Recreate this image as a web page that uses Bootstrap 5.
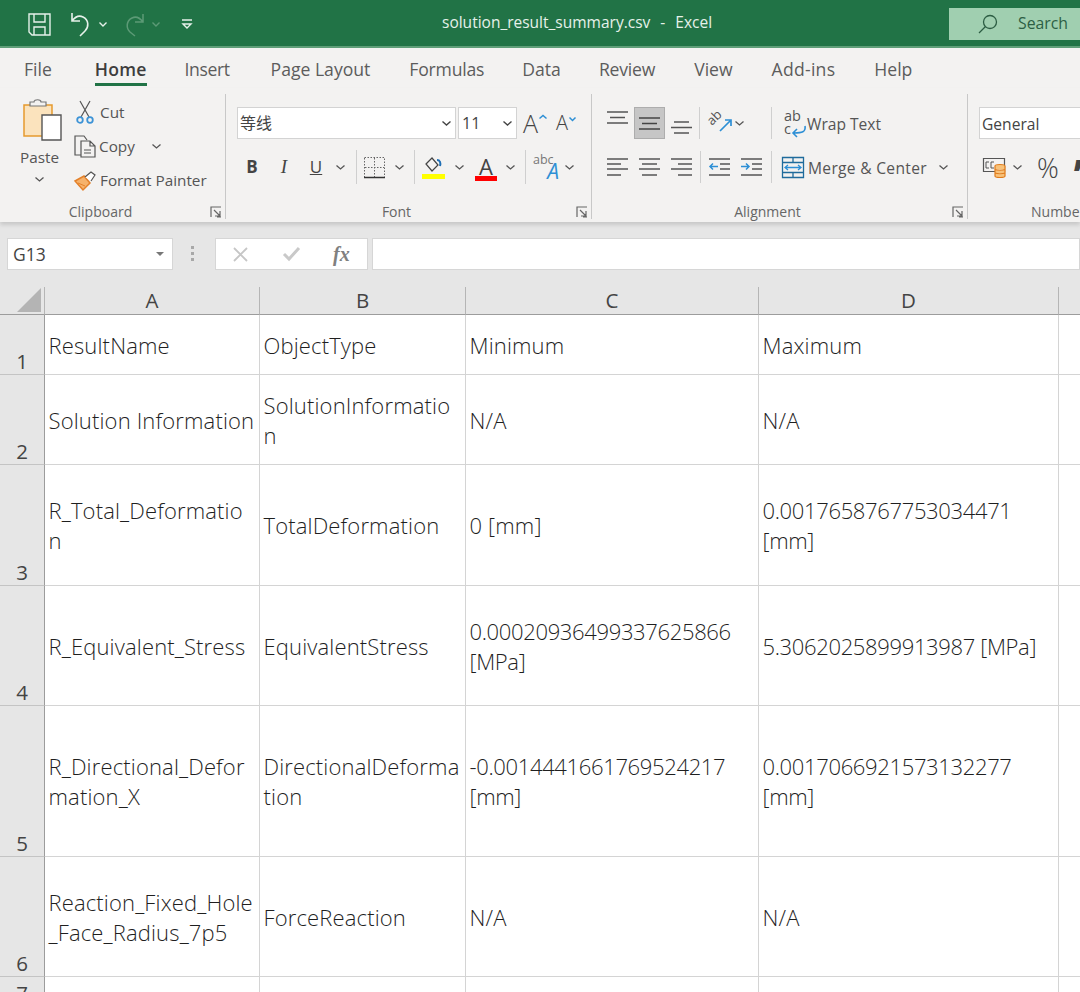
<!doctype html>
<html lang="en"><head><meta charset="utf-8"><title>solution_result_summary.csv - Excel</title>
<link href="https://cdn.jsdelivr.net/npm/bootstrap@5.3.0/dist/css/bootstrap.min.css" rel="stylesheet">
<style>
html,body{height:992px;overflow:hidden;background:#e6e6e6}
body{font-family:"Open Sans","Noto Sans CJK SC",sans-serif;color:#444}
svg{display:block;flex:none;overflow:visible}
.titlebar{height:48px;background:#217346;border-bottom:2px solid #5f9e78;color:#e6f1ea;position:relative}
.qat{padding-left:28px;margin-top:2px}
.q1{margin-left:19px}.q2{margin-left:7px}.q3{margin-left:16px}.q4{margin-left:22px}
.slot{display:flex;align-items:center;justify-content:center;flex:none}
.t-name{position:absolute;left:442px;top:11px;font-size:15.5px;line-height:22px;white-space:pre;word-spacing:1px}
.searchbox{margin-left:auto;margin-top:2px;width:131px;height:32px;background:#a0cfb0;color:#2d5f45;font-size:15.8px;padding-left:29px;gap:20px}
.tabs{height:40px;background:#f3f2f1;padding-left:24px;gap:38px;font-size:17.6px;color:#5c5c5c}
.tabs .nav-link{padding:0;color:#5c5c5c;height:38px;line-height:42px}
.tabs .nav-link.on{font-weight:600;color:#3d3d3d;border-bottom:3px solid #217346;letter-spacing:.2px}
.tb-file{margin-right:5px}.tb-ins{margin-right:3px;letter-spacing:-.4px}.tb-page{margin-right:1px}.tb-form{letter-spacing:-.2px}
.tb-rev{margin-right:1px;letter-spacing:-.2px}.tb-view{margin-right:1px}.tb-add{margin-right:1px;letter-spacing:.25px}
.ribbon{height:134px;padding-top:6px;background:#f3f2f1;box-shadow:0 3px 4px rgba(0,0,0,.13);position:relative;overflow:hidden;font-size:15.6px;color:#555}
.grp{flex:none;height:125px;border-right:1px solid #c8c8c8;position:relative;display:flex;flex-direction:column}
.grp-body{height:113px;flex:none}
.grp-foot{font-size:14px;line-height:18px;text-align:center;color:#666;height:18px;margin-top:-4px;padding-right:24px}
.launch{position:absolute;right:3px;bottom:1px}
.g-clip{width:226px}.g-font{width:366px}.g-align{width:376px}.g-num{width:112px;border:0}
.paste{width:68px;padding-left:22px;padding-top:5px}
.paste-lbl{display:block;width:38px;text-align:center;margin-top:6px;line-height:20px;margin-left:-2px;font-size:15.3px}
.chev-p{margin:10px 0 0 13px}
.cmds{padding-left:6px;padding-top:1px}
.cmd{height:34px;white-space:nowrap;font-size:15.3px}
.cmd-cut{gap:6px}.cmd-cut svg{margin-left:2px}
.cmd-copy{gap:3px}.cmd-fmt{gap:4px}
.chev-c{margin-left:14px}
.fieldbox{height:32px;background:#fff;border:1px solid #d3d3d3;color:#444;display:flex;align-items:center;justify-content:space-between;flex:none}
.g-font .grp-body,.g-align .grp-body,.g-num .grp-body{padding-top:13px}
.tool-row{height:32px}
.tool-row2{height:34px;margin-top:11px}
.f1{width:219px;margin-left:11px;padding:0 4px 0 2px;font-size:16px}
.f2{width:59px;margin-left:2px;padding:0 4px 0 3px;font-size:16px}
.vs{width:1px;height:34px;background:#cfcfcf;flex:none}
.selbtn{background:#c6c6c6;border:1px solid #adadad;height:32px}
.f3{width:102px;margin-left:11px;padding:3px 0 0 2px;font-size:15.6px}
.fxbar{height:65px;padding:16px 7px 0}
.fxbox{height:32px;background:#fff;border:1px solid #d6d6d6;flex:none}
.namebox{width:166px;font-size:17.5px;padding:0 8px 0 5px;color:#444}
.fxbtns{width:153px;margin-left:42px}
.fxinput{flex:1;margin-left:4px;margin-right:-7px}
.grip{width:3px;margin-left:18px;margin-right:-21px}
table.sheet{table-layout:fixed;width:1081px;border-collapse:separate;border-spacing:0;margin:0;background:#fff;font-size:22px;line-height:30px;color:#1f1f1f;font-family:"Open Sans","Noto Sans CJK SC",sans-serif;font-weight:300;letter-spacing:.15px}
.sheet td,.sheet th{padding:0 0 0 3.5px;border:0;border-right:1px solid #d4d4d4;border-bottom:1px solid #d4d4d4;vertical-align:middle;white-space:nowrap;overflow:hidden;box-shadow:none;background:#fff;color:#1f1f1f}
.sheet td.numv{letter-spacing:-.35px}
.sheet thead th{height:28px;background:#e6e6e6;font-weight:400;text-align:center;padding:0;font-size:20.5px;line-height:27px;border-bottom:1px solid #9c9c9c;border-right:1px solid #b5b5b5;color:#444;letter-spacing:0}
.sheet tbody th{background:#e6e6e6;font-weight:400;text-align:center;vertical-align:bottom;padding:0;font-size:20.5px;line-height:26px;border-right:1px solid #9c9c9c;border-bottom:1px solid #c4c4c4;color:#444;letter-spacing:0}
.r1{height:60px}.r2{height:90px}.r3{height:121px}.r4{height:120px}.r5{height:151px}.r6{height:120px}.r7{height:30px}
.corner{position:relative}
.font-up,.font-dn{color:#444;line-height:1;align-items:flex-start;position:relative;font-weight:300}
.font-up{font-size:25px;margin-left:6px;width:27px;justify-content:flex-start}.font-dn{font-size:20px;margin-left:6px;width:22px;justify-content:flex-start}
.font-up svg,.font-dn svg{margin:4px 0 0 1px}
.sb,.si,.su{width:32px;font-size:17px;color:#444}
.sb{margin-left:10px;font-weight:700}.si{font-style:italic;font-family:"Liberation Serif",serif;font-size:19px}.su{text-decoration:underline}
.su+svg{margin-left:4px}
.sp1{margin-left:11px}.sp2{margin-left:7px}.sp3{margin-left:10px}.sp3b{margin-left:10px}.sp4{margin-left:7px}
.colorA{width:22px;margin-left:11px;font-size:22px;line-height:20px;height:27px;border-bottom:5px solid #f00;color:#444;padding-top:2px}
.sp5{margin-left:9px}.sp3c{margin-left:10px}
.abc{width:26px;margin-left:7px;position:relative;height:26px}
.abc span{position:absolute;left:0;top:-1px;font-size:12.5px;line-height:14px;color:#777}
.abc b{position:absolute;right:0;bottom:-2px;font-size:21px;line-height:22px;font-weight:400;font-style:italic;color:#2d8fd5}
.sp6{margin-left:6px}
.al-row{padding-left:15px}
.a1{width:31px;margin-left:6px}.a2{margin-left:6px;margin-top:8px}.a0-t{margin-top:-12px}
.a3{margin-left:7px;height:32px}.a4{margin-left:8px}.a5{margin-left:4px}.a6{margin-left:27px;height:32px}
.wrap-ico{margin-left:12px;position:relative;width:22px;height:28px;font-size:14.5px;line-height:13px;color:#555}
.wrap-ico span{position:absolute;left:0;top:0}.wrap-ico svg{position:absolute;left:8px;top:17px}
.wraptxt{margin-left:1px;margin-top:4px}
.ori-t{font-family:"Open Sans",sans-serif;font-size:13px;fill:#555;stroke:none}
.b1,.b2{margin-left:11px}.b3{margin-left:8px;height:32px}.b4{margin-left:8px}.b5{margin-left:11px}.b6{margin-left:9px;height:32px}.b7{margin-left:10px}
.mergetxt{margin-left:4px;margin-top:3px;letter-spacing:.3px}.b8{margin-left:12px}
.c1{margin-left:15px}.c2{margin-left:7px}
.pct{margin-left:15px;font-size:27px;line-height:1;color:#444;font-weight:300}.cma{margin-left:14px;margin-top:-24px;font-size:44px;line-height:20px;height:34px;font-weight:700;color:#444}
.num-foot{text-align:left;padding:0 0 0 63px;white-space:nowrap}
.x1{margin-left:17px}.x2{margin-left:35px}
.fxl{margin-left:33px;font-family:"Liberation Serif",serif;font-style:italic;font-weight:700;font-size:20px;color:#808080}
.tri{position:absolute;right:3px;bottom:2px}
</style></head><body>
<div class="titlebar d-flex align-items-center">
 <div class="qat d-flex align-items-center">
  <svg width="23" height="23" viewBox="0 0 23 23" fill="none" stroke="#e6f1ea" stroke-width="1.4"><path d="M1 1h21v21H4l-3-3zM6 1v8h11V1M6 22v-8h11v8"/></svg>
  <svg class="q1" width="22" height="26" viewBox="0 0 22 26" fill="none" stroke="#e6f1ea" stroke-width="1.6"><path d="M2 2v8h8M2 10c3-4 7-6 11-4 6 3 6 10 2 14l-5 5"/></svg>
  <svg class="q2" width="8" height="5" viewBox="0 0 8 5" fill="none" stroke="#e6f1ea" stroke-width="1.4"><path d="M.5.5 4 4 7.500.5"/></svg>
  <svg class="q3" width="22" height="24" viewBox="0 0 22 24" fill="none" stroke="#5c9a76" stroke-width="1.5"><path d="M20 2v8h-8M20 10c-3-4-7-6-11-4-6 3-6 10-2 14l5 4"/></svg>
  <svg class="q2" width="8" height="5" viewBox="0 0 8 5" fill="none" stroke="#5c9a76" stroke-width="1.4"><path d="M.5.5 4 4 7.500.5"/></svg>
  <svg class="q4" width="10" height="10" viewBox="0 0 10 10" fill="none" stroke="#e6f1ea" stroke-width="1.4"><path d="M0 1h10M1 5l4 4 4-4z"/></svg>
 </div>
 <div class="t-name">solution_result_summary.csv  -  Excel</div>
 <div class="searchbox d-flex align-items-center">
  <svg width="20" height="20" viewBox="0 0 20 20" fill="none" stroke="#2c5d43" stroke-width="1.3"><circle cx="12" cy="8" r="6.500"/><path d="M7.500 12.500 1 19"/></svg><span>Search</span>
 </div>
</div>
<ul class="nav tabs">
 <li class="nav-item tb-file"><a class="nav-link" href="#">File</a></li>
 <li class="nav-item"><a class="nav-link on" href="#">Home</a></li>
 <li class="nav-item tb-ins"><a class="nav-link" href="#">Insert</a></li>
 <li class="nav-item tb-page"><a class="nav-link" href="#">Page Layout</a></li>
 <li class="nav-item tb-form"><a class="nav-link" href="#">Formulas</a></li>
 <li class="nav-item"><a class="nav-link" href="#">Data</a></li>
 <li class="nav-item tb-rev"><a class="nav-link" href="#">Review</a></li>
 <li class="nav-item tb-view"><a class="nav-link" href="#">View</a></li>
 <li class="nav-item tb-add"><a class="nav-link" href="#">Add-ins</a></li>
 <li class="nav-item"><a class="nav-link" href="#">Help</a></li>
</ul>
<div class="ribbon d-flex">
 <div class="grp g-clip">
  <div class="grp-body d-flex">
   <div class="paste">
    <svg width="40" height="42" viewBox="0 0 40 42" fill="none"><path d="M2 6h28v31H2z" fill="#fbe3bd" stroke="#e69a2e" stroke-width="1.500"/><path d="M8 6V3h4c0-3 7-3 7 0h5v4H8z" fill="#f3f2f1" stroke="#777" stroke-width="1.200"/><path d="M20 16h19v25H20z" fill="#fff" stroke="#555" stroke-width="1.400"/></svg>
    <span class="paste-lbl">Paste</span>
    <svg class="chev-p" width="9" height="5" viewBox="0 0 9 5" fill="none" stroke="#555" stroke-width="1.3"><path d="M.5.5 4.500 4 8.500.5"/></svg>
   </div>
   <div class="cmds">
    <div class="cmd cmd-cut d-flex align-items-center"><svg width="18" height="24" viewBox="0 0 18 24" fill="none" stroke="#555" stroke-width="1.200"><path d="M4 1l9 16M14 1 5 17"/><circle cx="4" cy="20" r="2.800" stroke="#3c93d6" stroke-width="1.800"/><circle cx="14" cy="20" r="2.800" stroke="#3c93d6" stroke-width="1.800"/></svg><span>Cut</span></div>
    <div class="cmd cmd-copy d-flex align-items-center"><svg width="22" height="23" viewBox="0 0 22 23" fill="none" stroke="#555" stroke-width="1.200"><path d="M7 20H1V1h9l3 4M7 6h9l5 5v11H7z M16 6v5h5M10 15h7M10 18h7"/></svg><span>Copy</span><svg class="chev-c" width="9" height="5" viewBox="0 0 9 5" fill="none" stroke="#555" stroke-width="1.300"><path d="M.5.500 4.500 4 8.500.5"/></svg></div>
    <div class="cmd cmd-fmt d-flex align-items-center"><svg width="22" height="21" viewBox="0 0 22 21" fill="none"><path d="M1 11 10 6l6 7-7 7z" fill="#f6b26b" stroke="#e4812a" stroke-width="1.500"/><path d="M11 7l6-5 4 3-4 6" fill="#fff" stroke="#555" stroke-width="1.200"/><path d="M4 13l7 3" stroke="#e4812a"/></svg><span>Format Painter</span></div>
   </div>
  </div>
  <div class="grp-foot">Clipboard</div>
  <svg class="launch" width="12" height="12" viewBox="0 0 12 12" fill="none" stroke="#666"><path d="M1 11V1h10M4 4l6 6M10 5v5H5M7 11h4" stroke-width="1.200"/></svg>
 </div>
 <div class="grp g-font">
  <div class="grp-body">
   <div class="tool-row d-flex align-items-center">
    <div class="fieldbox f1"><span>等线</span><svg width="9" height="5" viewBox="0 0 9 5" fill="none" stroke="#444" stroke-width="1.400"><path d="M.5.500 4.500 4 8.500.5"/></svg></div>
    <div class="fieldbox f2"><span>11</span><svg width="9" height="5" viewBox="0 0 9 5" fill="none" stroke="#444" stroke-width="1.400"><path d="M.5.500 4.500 4 8.500.5"/></svg></div>
    <div class="slot font-up">A<svg width="8" height="4" viewBox="0 0 8 4" fill="none" stroke="#2d8fd5" stroke-width="1.500"><path d="M.5 3.500 4 .5l3.500 3"/></svg></div>
    <div class="slot font-dn">A<svg width="7" height="4" viewBox="0 0 7 4" fill="none" stroke="#2d8fd5" stroke-width="1.500"><path d="M.5.500 3.500 3.500 6.500.5"/></svg></div>
   </div>
   <div class="tool-row2 d-flex align-items-center">
    <div class="slot sb">B</div><div class="slot si">I</div><div class="slot su">U</div>
    <svg width="9" height="5" viewBox="0 0 9 5" fill="none" stroke="#555" stroke-width="1.300"><path d="M.5.500 4.500 4 8.500.5"/></svg>
    <div class="vs sp1"></div>
    <svg class="sp2" width="21" height="21" viewBox="0 0 21 21" fill="none" stroke="#666" stroke-dasharray="1.500 1.500"><path d="M.5.500h20v20H.5zM10.500 1v19M1 10.500h19"/><path d="M0 20.500h21" stroke="#333" stroke-width="1.500" stroke-dasharray="none"/></svg>
    <svg class="sp3" width="9" height="5" viewBox="0 0 9 5" fill="none" stroke="#555" stroke-width="1.300"><path d="M.5.500 4.500 4 8.500.5"/></svg>
    <div class="vs sp3b"></div>
    <svg class="sp4" width="23" height="23" viewBox="0 0 23 23" fill="none"><path d="M4 8l6-6 6 7-6 6z" stroke="#444" stroke-width="1.200"/><path d="M15 4c3 0 4 3 3 6" stroke="#1f6fb5" stroke-width="2"/><path d="M0 18h23v5H0z" fill="#ffff00"/></svg>
    <svg class="sp3" width="9" height="5" viewBox="0 0 9 5" fill="none" stroke="#555" stroke-width="1.300"><path d="M.5.500 4.500 4 8.500.5"/></svg>
    <div class="slot colorA">A</div>
    <svg class="sp5" width="9" height="5" viewBox="0 0 9 5" fill="none" stroke="#555" stroke-width="1.300"><path d="M.5.500 4.500 4 8.500.5"/></svg>
    <div class="vs sp3c"></div>
    <div class="slot abc"><span>abc</span><b>A</b></div>
    <svg class="sp6" width="9" height="5" viewBox="0 0 9 5" fill="none" stroke="#555" stroke-width="1.300"><path d="M.5.500 4.500 4 8.500.5"/></svg>
   </div>
  </div>
  <div class="grp-foot">Font</div>
  <svg class="launch" width="12" height="12" viewBox="0 0 12 12" fill="none" stroke="#666"><path d="M1 11V1h10M4 4l6 6M10 5v5H5M7 11h4" stroke-width="1.200"/></svg>
 </div>
 <div class="grp g-align">
  <div class="grp-body">
   <div class="tool-row d-flex align-items-center al-row">
    <svg class="a0-t" width="21" height="13" viewBox="0 0 21 13" stroke="#555" stroke-width="1.500"><path d="M0 1h21M3 6.500h15M0 12h21" /></svg>
    <div class="slot selbtn a1"><svg width="21" height="13" viewBox="0 0 21 13" stroke="#444" stroke-width="1.500"><path d="M0 1h21M3 6.500h15M0 12h21"/></svg></div>
    <svg class="a2" width="21" height="13" viewBox="0 0 21 13" stroke="#555" stroke-width="1.500"><path d="M3 1h15M0 6.500h21M3 12h15" /></svg>
    <div class="vs a3"></div>
    <svg class="a4" width="23" height="20" viewBox="0 0 23 20" fill="none" stroke="#555" stroke-width="1.200"><text class="ori-t" transform="translate(4 13) rotate(-45)">ab</text><path d="M12 18 22 8M17 7h6v6" stroke="#2d8fd5" stroke-width="1.700"/></svg>
    <svg class="a5" width="9" height="5" viewBox="0 0 9 5" fill="none" stroke="#555" stroke-width="1.300"><path d="M.5.500 4.500 4 8.500.5"/></svg>
    <div class="vs a6"></div>
    <div class="wrap-ico"><span>ab<br>c</span><svg width="14" height="11" viewBox="0 0 14 11" fill="none" stroke="#2d8fd5" stroke-width="1.600"><path d="M13 0c1 6-3 7-11 7M5 3 1 7l4 4"/></svg></div>
    <span class="wraptxt">Wrap Text</span>
   </div>
   <div class="tool-row2 d-flex align-items-center al-row">
    <svg width="21" height="18" viewBox="0 0 21 18" stroke="#555" stroke-width="1.500"><path d="M0 1h21M0 6h14M0 11h21M0 17h14"/></svg>
    <svg class="b1" width="21" height="18" viewBox="0 0 21 18" stroke="#555" stroke-width="1.500"><path d="M0 1h21M3 6h15M0 11h21M3 17h15"/></svg>
    <svg class="b2" width="21" height="18" viewBox="0 0 21 18" stroke="#555" stroke-width="1.500"><path d="M0 1h21M7 6h14M0 11h21M7 17h14"/></svg>
    <div class="vs b3"></div>
    <svg class="b4" width="21" height="18" viewBox="0 0 21 18" fill="none" stroke="#555" stroke-width="1.500"><path d="M0 1h21M11 6h10M11 11h10M0 17h21"/><path d="M9 8.500H1M4 5.500l-3 3 3 3" stroke="#2d8fd5"/></svg>
    <svg class="b5" width="21" height="18" viewBox="0 0 21 18" fill="none" stroke="#555" stroke-width="1.500"><path d="M0 1h21M11 6h10M11 11h10M0 17h21"/><path d="M0 8.500h8M5 5.500l3 3-3 3" stroke="#2d8fd5"/></svg>
    <div class="vs b6"></div>
    <svg class="b7" width="22" height="21" viewBox="0 0 22 21" fill="none" stroke="#1f6b9c" stroke-width="1.300"><path d="M.5.500h21v20H.5zM.5 5.500h21M.5 15.500h21M11 .5v5M11 15.500v5"/><path d="M3 10.500h16M6 8l-3 2.500L6 13M16 8l3 2.500-3 2.500" stroke="#2d8fd5"/></svg>
    <span class="mergetxt">Merge &amp; Center</span>
    <svg class="b8" width="9" height="5" viewBox="0 0 9 5" fill="none" stroke="#555" stroke-width="1.300"><path d="M.5.500 4.500 4 8.500.5"/></svg>
   </div>
  </div>
  <div class="grp-foot">Alignment</div>
  <svg class="launch" width="12" height="12" viewBox="0 0 12 12" fill="none" stroke="#666"><path d="M1 11V1h10M4 4l6 6M10 5v5H5M7 11h4" stroke-width="1.200"/></svg>
 </div>
 <div class="grp g-num">
  <div class="grp-body">
   <div class="tool-row d-flex align-items-center"><div class="fieldbox f3"><span>General</span></div></div>
   <div class="tool-row2 d-flex align-items-center">
    <svg class="c1" width="23" height="21" viewBox="0 0 23 21" fill="none"><path d="M.5 1.500h21v13H.5z" stroke="#555" stroke-width="1.200"/><path d="M6 5H3v6h3M11 5H8v6h3" stroke="#555"/><path d="M12 9c0-2 10-2 10 0v10c0 2-10 2-10 0zM12 12.500c2 1 8 1 10 0M12 16c2 1 8 1 10 0" fill="#f8c27a" stroke="#e07b1a" stroke-width="1.200"/></svg>
    <svg class="c2" width="9" height="5" viewBox="0 0 9 5" fill="none" stroke="#555" stroke-width="1.300"><path d="M.5.500 4.500 4 8.500.5"/></svg>
    <span class="pct">%</span>
    <span class="cma">,</span>
   </div>
  </div>
  <div class="grp-foot num-foot">Number</div>
 </div>
</div>
<div class="fxbar d-flex align-items-start">
 <div class="fxbox namebox d-flex align-items-center justify-content-between"><span>G13</span><svg width="8" height="4" viewBox="0 0 8 4" fill="#777"><path d="M0 0h8L4 4z"/></svg></div>
 <div class="grip"><svg width="3" height="15" class="mt-2" viewBox="0 0 3 15" fill="#a8a8a8"><path d="M0 0h3v3H0zM0 6h3v3H0zM0 12h3v3H0z"/></svg></div>
 <div class="fxbox fxbtns d-flex align-items-center">
  <svg class="x1" width="15" height="15" viewBox="0 0 15 15" stroke="#c6c6c6" stroke-width="1.800"><path d="M1 1l13 13M14 1 1 14"/></svg>
  <svg class="x2" width="17" height="14" viewBox="0 0 17 14" fill="none" stroke="#c9c9c9" stroke-width="3"><path d="M1 7l5 5L16 1"/></svg>
  <span class="fxl">fx</span>
 </div>
 <div class="fxbox fxinput"></div>
</div>
<table class="sheet table">
 <colgroup><col style="width:45px"><col style="width:215px"><col style="width:206px"><col style="width:293px"><col style="width:300px"><col style="width:22px"></colgroup>
 <thead><tr><th class="corner"><svg class="tri" width="24" height="24" viewBox="0 0 24 24"><path d="M24 0v24H0z" fill="#b4b4b4"/></svg></th><th>A</th><th>B</th><th>C</th><th>D</th><th></th></tr></thead>
 <tbody>
  <tr class="r1"><th>1</th><td>ResultName</td><td>ObjectType</td><td>Minimum</td><td>Maximum</td><td></td></tr>
  <tr class="r2"><th>2</th><td>Solution Information</td><td>SolutionInformatio<br>n</td><td>N/A</td><td>N/A</td><td></td></tr>
  <tr class="r3"><th>3</th><td>R_Total_Deformatio<br>n</td><td>TotalDeformation</td><td>0 [mm]</td><td class="numv">0.0017658767753034471<br>[mm]</td><td></td></tr>
  <tr class="r4"><th>4</th><td>R_Equivalent_Stress</td><td>EquivalentStress</td><td class="numv">0.00020936499337625866<br>[MPa]</td><td class="numv">5.3062025899913987 [MPa]</td><td></td></tr>
  <tr class="r5"><th>5</th><td>R_Directional_Defor<br>mation_X</td><td>DirectionalDeforma<br>tion</td><td class="numv">-0.0014441661769524217<br>[mm]</td><td class="numv">0.0017066921573132277<br>[mm]</td><td></td></tr>
  <tr class="r6"><th>6</th><td>Reaction_Fixed_Hole<br>_Face_Radius_7p5</td><td>ForceReaction</td><td>N/A</td><td>N/A</td><td></td></tr>
  <tr class="r7"><th>7</th><td></td><td></td><td></td><td></td><td></td></tr>
 </tbody>
</table>
</body></html>
